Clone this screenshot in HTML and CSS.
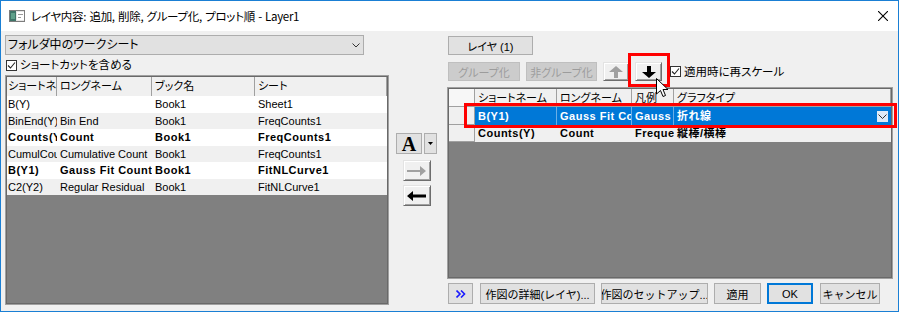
FILE: index.html
```html
<!DOCTYPE html>
<html lang="ja">
<head>
	<meta charset="UTF-8">
	<title>レイヤ内容</title>
	<link rel="stylesheet" href="styles.css">
</head>
<body>
<div class="win">
	<div class="titlebar">
		<svg class="appicon" width="16" height="12" viewBox="0 0 16 12">
			<rect x="0.5" y="0.5" width="15" height="11" fill="#e6e6e6" stroke="#7d7d7d"/>
			<rect x="1" y="1" width="6" height="10" fill="#3f7468"/>
			<rect x="2" y="3" width="4" height="6" fill="#5fa08a"/>
			<rect x="8" y="2" width="7" height="8" fill="#fff"/>
			<rect x="9" y="4" width="5" height="1" fill="#9a9a9a"/>
			<rect x="9" y="7" width="3" height="1" fill="#9a9a9a"/>
		</svg>
		<span class="title">レイヤ内容: 追加, 削除, グループ化, プロット順 - Layer1</span>
		<svg class="close" width="10" height="10" viewBox="0 0 10 10"><path d="M0 0L10 10M10 0L0 10" stroke="#000" stroke-width="1.1"/></svg>
	</div>
	<div class="main">
		<!-- 左：ワークシート一覧 -->
		<div class="left">
			<div class="combo">
				<span>フォルダ中のワークシート</span>
				<svg width="8" height="5" viewBox="0 0 8 5"><path d="M0.5 0.5L4 4L7.5 0.5" fill="none" stroke="#333"/></svg>
			</div>
			<div class="check">
				<span class="cbox"><svg width="9" height="9" viewBox="0 0 9 9"><path d="M1 4.5L3.5 7L8 1.5" fill="none" stroke="#222" stroke-width="1.1"/></svg></span>
				<span>ショートカットを含める</span>
			</div>
			<div class="grid lgrid">
				<div class="ginner">
					<div class="row head">
						<div class="c l1">ショートネーム</div>
						<div class="c l2">ロングネーム</div>
						<div class="c l3">ブック名</div>
						<div class="c l4">シート</div>
					</div>
					<div class="row">
						<div class="c l1">B(Y)</div>
						<div class="c l2"></div>
						<div class="c l3">Book1</div>
						<div class="c l4">Sheet1</div>
					</div>
					<div class="row alt">
						<div class="c l1">BinEnd(Y)</div>
						<div class="c l2">Bin End</div>
						<div class="c l3">Book1</div>
						<div class="c l4">FreqCounts1</div>
					</div>
					<div class="row bold">
						<div class="c l1">Counts(Y)</div>
						<div class="c l2">Count</div>
						<div class="c l3">Book1</div>
						<div class="c l4">FreqCounts1</div>
					</div>
					<div class="row alt">
						<div class="c l1">CumulCount(Y)</div>
						<div class="c l2">Cumulative Count</div>
						<div class="c l3">Book1</div>
						<div class="c l4">FreqCounts1</div>
					</div>
					<div class="row bold">
						<div class="c l1">B(Y1)</div>
						<div class="c l2">Gauss Fit Counts</div>
						<div class="c l3">Book1</div>
						<div class="c l4">FitNLCurve1</div>
					</div>
					<div class="row alt">
						<div class="c l1">C2(Y2)</div>
						<div class="c l2">Regular Residual</div>
						<div class="c l3">Book1</div>
						<div class="c l4">FitNLCurve1</div>
					</div>
					<div class="fill"></div>
				</div>
			</div>
		</div>

		<!-- 中央：追加・削除ボタン -->
		<div class="mid">
			<div class="fontrow">
				<button class="btn abtn">A</button>
				<button class="btn ddbtn"><svg width="5" height="3" viewBox="0 0 5 3"><path d="M0 0H5L2.5 3Z" fill="#000"/></svg></button>
			</div>
			<button class="btn raised arrbtn"><svg width="20" height="10" viewBox="0 0 20 10"><path d="M0 4H13V0L19 5L13 10V6H0Z" fill="#a0a0a0"/></svg></button>
			<button class="btn raised arrbtn arr2"><svg width="20" height="10" viewBox="0 0 20 10"><path d="M0 5L6 0V3.5H19V6.5H6V10Z" fill="#000"/></svg></button>
		</div>

		<!-- 右：レイヤ内容 -->
		<div class="right">
			<button class="btn layerbtn">レイヤ (1)</button>
			<div class="tools">
				<button class="btn dis w72">グループ化</button>
				<button class="btn dis w71">非グループ化</button>
				<button class="btn raised w26"><svg width="16" height="12" viewBox="0 0 16 12"><path d="M8 0L15 6H10V12H6V6H1Z" fill="#a0a0a0"/></svg></button>
				<button class="btn raised w27"><svg width="16" height="12" viewBox="0 0 16 12"><path d="M6 0H10V6H15L8 12L1 6H6Z" fill="#000"/></svg></button>
				<div class="check check2">
					<span class="cbox"><svg width="9" height="9" viewBox="0 0 9 9"><path d="M1 4.5L3.5 7L8 1.5" fill="none" stroke="#222" stroke-width="1.1"/></svg></span>
					<span>適用時に再スケール</span>
				</div>
			</div>
			<div class="grid rgrid">
				<div class="ginner">
					<div class="row rhead">
						<div class="c r0"></div>
						<div class="c r1">ショートネーム</div>
						<div class="c r2">ロングネーム</div>
						<div class="c r3">凡例</div>
						<div class="c r4">グラフタイプ</div>
					</div>
					<div class="row rsel">
						<div class="c r0"></div>
						<div class="c r1">B(Y1)</div>
						<div class="c r2">Gauss Fit Counts</div>
						<div class="c r3">Gauss Fit</div>
						<div class="c r4"><span>折れ線</span><span class="dd"><svg width="9" height="5" viewBox="0 0 9 5"><path d="M0.5 0.5L4.5 4.5L8.5 0.5" fill="none" stroke="#333"/></svg></span></div>
					</div>
					<div class="row rrow">
						<div class="c r0"></div>
						<div class="c r1">Counts(Y)</div>
						<div class="c r2">Count</div>
						<div class="c r3">Frequency</div>
						<div class="c r4">縦棒/横棒</div>
					</div>
					<div class="fill"></div>
				</div>
			</div>
			<div class="bottom">
				<button class="btn w25"><svg width="10" height="8" viewBox="0 0 10 8"><path d="M0.5 0.5L4 4L0.5 7.5M5 0.5L8.5 4L5 7.5" fill="none" stroke="#1a1aff" stroke-width="1.6"/></svg></button>
				<button class="btn w115">作図の詳細(レイヤ)...</button>
				<button class="btn w107">作図のセットアップ...</button>
				<button class="btn w47">適用</button>
				<button class="btn ok w46">OK</button>
				<button class="btn w60">キャンセル</button>
			</div>
		</div>
	</div>

	<!-- 注釈の赤枠とカーソル -->
	<div class="mark mark-btn"></div>
	<div class="mark mark-row"></div>
	<svg class="cursor" width="13" height="20" viewBox="0 0 13 20"><path d="M0.5 0.5V16L4.5 12.5L7 18.5L9.5 17.5L7 11.5H12Z" fill="#fff" stroke="#000"/></svg>
</div>
</body>
</html>
```

FILE: styles.css
```css
*{
	box-sizing: border-box;
}
body{
	margin: 0;
	font-family: "Liberation Sans", "Noto Sans CJK JP", sans-serif;
	font-size: 11px;
	color: #000;
	font-feature-settings: "palt";
}
.win{
	position: relative;
	width: 899px;
	height: 312px;
	border: 1px solid #1a7fd4;
	background: #f0f0f0;
}
/* タイトルバー */
.titlebar{
	height: 30px;
	background: #fff;
	display: flex;
	align-items: center;
	padding-left: 8px;
}
.title{
	margin-left: 6px;
	font-family: "Noto Sans CJK JP", sans-serif;
	font-size: 11.5px;
	letter-spacing: -0.3px;
	word-spacing: 1px;
	line-height: 14px;
}
.close{
	margin-left: auto;
	margin-right: 10px;
}
.main{
	display: flex;
	height: 280px;
	padding-left: 4px;
}
/* ボタン共通 */
.btn{
	font: inherit;
	margin: 0;
	padding: 0;
	height: 19px;
	background: #e1e1e1;
	border: 1px solid #adadad;
	color: #000;
	display: flex;
	align-items: center;
	justify-content: center;
	white-space: nowrap;
	overflow: hidden;
}
.btn.dis{
	background: #cccccc;
	border-color: #bfbfbf;
	color: #9c9c9c;
}
.btn.raised{
	background: #f0f0f0;
	border-color: #e3e3e3 #6d6d6d #6d6d6d #e3e3e3;
	box-shadow: inset 1px 1px 0 #fff, inset -1px -1px 0 #a0a0a0;
}
.btn.ok{
	border-color: #0078d7;
	box-shadow: inset 0 0 0 1px #0078d7;
}
/* 左 */
.left{
	width: 384px;
	display: flex;
	flex-direction: column;
}
.combo{
	margin-top: 4px;
	width: 359px;
	height: 20px;
	background: #e1e1e1;
	border: 1px solid #adadad;
	display: flex;
	align-items: center;
	justify-content: space-between;
	padding: 0 3px 0 2px;
	font-size: 12px;
	line-height: 14px;
}
.check{
	margin-top: 3px;
	height: 14px;
	display: flex;
	align-items: center;
	font-size: 11.5px;
	line-height: 14px;
}
.cbox{
	width: 11px;
	height: 11px;
	margin: 0 3px 0 1px;
	border: 1px solid #333;
	background: #fff;
	display: flex;
	align-items: center;
	justify-content: center;
}
.grid{
	border: 1px solid #a0a0a0;
}
.ginner{
	height: 100%;
	border: 1px solid #696969;
	display: flex;
	flex-direction: column;
	background: #fff;
	overflow: hidden;
}
.lgrid{
	margin-top: 3px;
	height: 230px;
}
.row{
	display: flex;
	flex: none;
	height: 16.5px;
	line-height: 16.5px;
	background: #fff;
}
.row.alt{
	background: #f0f0f0;
}
.row.bold{
	font-weight: bold;
	letter-spacing: 0.5px;
}
.c{
	flex: none;
	overflow: hidden;
	white-space: nowrap;
	padding-left: 3px;
}
.row.head{
	height: 19px;
	line-height: 19px;
	background: #f0f0f0;
}
.row.head .c{
	border-right: 1px solid #a0a0a0;
}
.l1{ width: 50px; padding-left: 1px; }
.l2{ width: 95px; }
.l3{ width: 103px; }
.l4{ flex: 1; }
.fill{
	flex: 1;
	background: #808080;
}
/* 中央 */
.mid{
	width: 58px;
	display: flex;
	flex-direction: column;
	padding: 102px 0 0 7px;
}
.fontrow{
	display: flex;
	gap: 2px;
}
.abtn{
	width: 26px;
	height: 21px;
	font-family: "Liberation Serif", serif;
	font-weight: bold;
	font-size: 20px;
	line-height: 20px;
}
.ddbtn{
	width: 13px;
	height: 21px;
}
.arrbtn{
	margin: 6px 0 0 7px;
	width: 28px;
	height: 21px;
}
.arr2{
	margin-top: 4px;
}
/* 右 */
.right{
	width: 446px;
	display: flex;
	flex-direction: column;
}
.layerbtn{
	margin: 5px 0 0 1px;
	width: 85px;
}
.tools{
	margin: 7px 0 0 1px;
	display: flex;
	gap: 6px;
	height: 19px;
}
.check2{
	margin: 0 0 0 1px;
	height: 19px;
}
.w72{ width: 72px; }
.w71{ width: 71px; }
.w26{ width: 26px; }
.w27{ width: 27px; }
.rgrid{
	margin-top: 6px;
	height: 192px;
}
.r0{ width: 26px; }
.r1{ width: 82px; }
.r2{ width: 75px; }
.r3{ width: 42px; }
.r4{ flex: 1; }
.row.rhead{
	height: 18px;
	line-height: 18px;
	background: #f0f0f0;
}
.rhead .c{
	border-right: 1px solid #a0a0a0;
	border-bottom: 1px solid #a0a0a0;
}
.rhead .r0{
	background: #f7f7f7;
}
.row.rsel{
	height: 18px;
	line-height: 18px;
	background: #0078d7;
	color: #fff;
	font-weight: bold;
	letter-spacing: 0.5px;
}
.rsel .c{
	border-right: 1px solid #6aaee6;
}
.rsel .r4{
	display: flex;
	justify-content: space-between;
	align-items: center;
	border-right: none;
}
.row.rrow{
	height: 17px;
	line-height: 17px;
	background: #f0f0f0;
	font-weight: bold;
	letter-spacing: 0.5px;
}
.rsel .r0, .rrow .r0{
	background: #f0f0f0;
	border-right: 1px solid #a0a0a0;
	border-bottom: 1px solid #a0a0a0;
}
.dd{
	width: 11px;
	height: 11px;
	margin-right: 3px;
	background: #dfeaf7;
	display: flex;
	align-items: center;
	justify-content: center;
}
.bottom{
	margin: 4px 0 0 1px;
	display: flex;
	gap: 6px;
	font-feature-settings: normal;
}
.bottom .btn{
	height: 21px;
}
.w25{ width: 25px; margin-right: 1px; }
.w115{ width: 115px; }
.w107{ width: 107px; }
.w47{ width: 47px; }
.w46{ width: 46px; margin-right: 1px; }
.w60{ width: 60px; }
/* 注釈 */
.mark{
	position: absolute;
	border: 3px solid #f00;
}
.mark-btn{
	left: 627px;
	top: 52px;
	width: 42px;
	height: 34px;
}
.mark-row{
	left: 463px;
	top: 102px;
	width: 433px;
	height: 25px;
}
.cursor{
	position: absolute;
	left: 655px;
	top: 77px;
}
```
